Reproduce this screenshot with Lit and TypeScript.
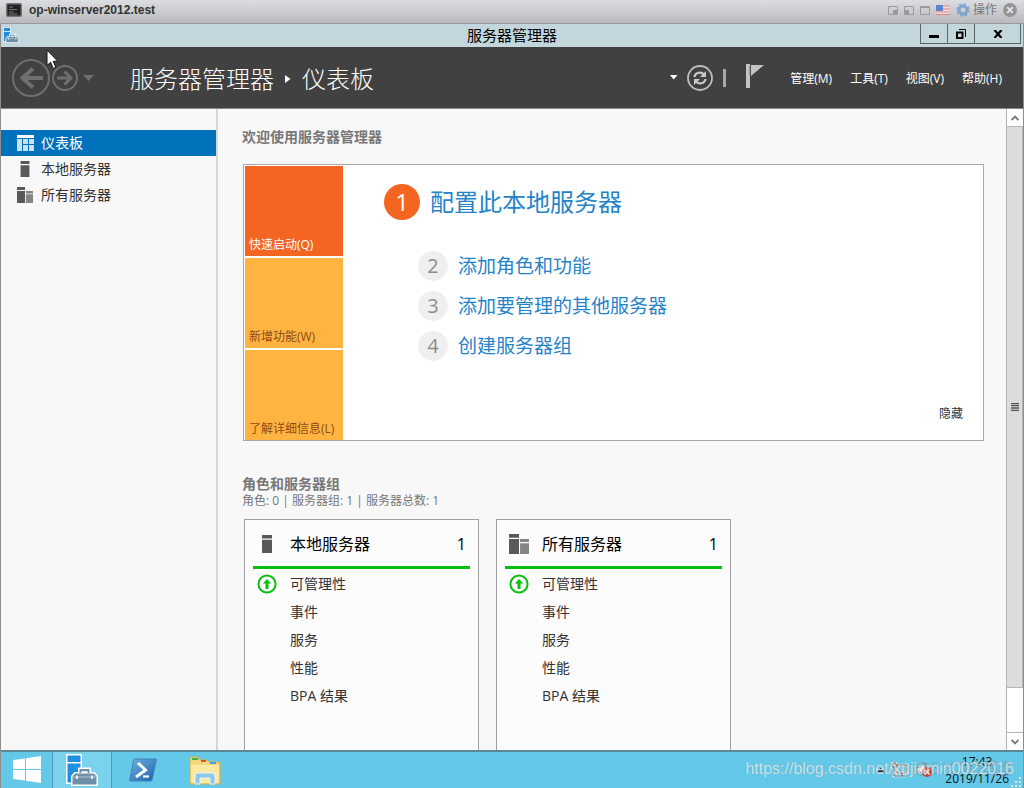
import { LitElement, html, css, svg } from "lit";
import { customElement, state } from "lit/decorators.js";
import { classMap } from "lit/directives/class-map.js";

const toolboxIcon = (size: number) => html`
  <svg width=${size} height=${size} viewBox="0 0 32 32" aria-hidden="true">
    <path d="M0 0h16v30H0z" fill="#fff" />
    <path d="M1.500 1.500h13v6.500h-13zM1.500 9.500h13v19h-13z" fill="#1f8fe0" />
    <path d="M14 19v-3.500h9V19" fill="none" stroke="#fff" stroke-width="4" />
    <path d="M8.500 18h20l3.500 4v10H5V22z" fill="#fff" />
    <path d="M14.500 19v-3h8v3" fill="none" stroke="#6f8fa8" stroke-width="2" />
    <path d="M9 19.500h19l2.500 3v8h-24v-8z" fill="#6f8fa8" />
    <path d="M7 23h23" stroke="#c5d3dd" stroke-width="0.800" />
    <path d="M11 21.500v3.500M26 21.500v3.500" stroke="#fff" stroke-width="1.600" />
  </svg>`;

const singleServer = (size: number) => html`
  <svg width=${size} height=${size} viewBox="0 0 18 18" aria-hidden="true">
    <path d="M4 0h10v3.500H4zM4 4.700h10V18H4z" fill="#595959" />
  </svg>`;

const allServers = (width: number, height: number) => html`
  <svg width=${width} height=${height} viewBox="0 0 19 19" preserveAspectRatio="none" aria-hidden="true">
    <path d="M0 0h9.500v3.500H0zM0 4.700h9.500V19H0z" fill="#595959" />
    <path d="M10.500 4.700H19v3h-8.500zM10.500 8.700H19V19h-8.500z" fill="#858585" />
  </svg>`;

const dashboardIcon = html`
  <svg width="17" height="16" viewBox="0 0 17 16" aria-hidden="true">
    <path d="M0 0h17v3H0z" fill="#fff" />
    <path d="M0 4h5v12H0zM6 4h5v5H6zM12 4h5v5h-5zM6 10h5v6H6zM12 10h5v6h-5z" fill="#c9e2f3" />
  </svg>`;

@customElement("server-card")
class ServerCard extends LitElement {
  static properties = {
    label: { type: String },
    count: { type: Number },
    group: { type: Boolean },
  };
  declare label: string;
  declare count: number;
  declare group: boolean;

  static styles = css`
    :host {
      display: block;
      box-sizing: border-box;
      flex: 0 0 235px;
      min-height: 260px;
      padding: 0 8px;
      border: 1px solid #a0a0a0;
      background: #fcfcfc;
    }
    button {
      font: inherit;
      color: inherit;
      background: none;
      border: 0;
      padding: 0;
      text-align: left;
    }
    .head {
      display: flex;
      align-items: center;
      width: 100%;
      height: 49px;
      padding-top: 2px;
      margin-bottom: 1px;
      border-bottom: 3px solid #0abf0f;
      color: #000;
      font-size: 16px;
      box-sizing: border-box;
    }
    .icon {
      display: flex;
      justify-content: center;
      width: 28px;
      margin-right: 9px;
    }
    .name { flex: 1; }
    .count { padding-right: 4px; }
    ul {
      list-style: none;
      margin: 0;
      padding: 0;
      font-size: 14px;
      color: #333;
    }
    li {
      display: flex;
      align-items: center;
      height: 28px;
    }
  `;

  render() {
    const rows = ["可管理性", "事件", "服务", "性能", "BPA 结果"];
    return html`
      <button class="head">
        <span class="icon">${this.group ? allServers(20, 20) : singleServer(18)}</span>
        <span class="name">${this.label}</span>
        <span class="count">${this.count}</span>
      </button>
      <ul>
        ${rows.map(
          (row, i) => html`<li>
            <span class="icon">
              ${i === 0
                ? html`<svg width="20" height="20" viewBox="0 0 20 20" aria-hidden="true">
                    <circle cx="10" cy="10" r="8.600" fill="none" stroke="#0abf0f" stroke-width="2" />
                    <path d="M10 5l4.200 4.500h-2.700V15h-3V9.500H5.800z" fill="#0abf0f" />
                  </svg>`
                : ""}
            </span>
            <button>${row}</button>
          </li>`
        )}
      </ul>
    `;
  }
}

@customElement("app-root")
class AppRoot extends LitElement {
  @state() page = 0;

  static styles = css`
    :host {
      display: flex;
      flex-direction: column;
      box-sizing: border-box;
      height: 100vh;
      overflow: hidden;
      position: relative;
      background: #f8f8f8;
      color: #333;
      font: 14px/20px "Open Sans", "Noto Sans CJK SC", sans-serif;
    }
    button {
      font: inherit;
      color: inherit;
      background: none;
      border: 0;
      padding: 0;
      text-align: left;
    }
    a { color: inherit; text-decoration: none; }
    svg { display: block; flex: none; }
    h1, h2, p, ol { margin: 0; padding: 0; font-weight: 400; }

    .console {
      display: flex;
      align-items: center;
      box-sizing: border-box;
      flex: 0 0 24px;
      padding: 0 7px 3px 6px;
      border-bottom: 1px solid #9a9a9c;
      background: linear-gradient(#dcdde1, #b9babd);
    }
    .console-name {
      flex: 1;
      margin-left: 7px;
      font: bold 12px/16px "Liberation Sans", sans-serif;
      color: #333;
    }
    .console-tools {
      display: flex;
      align-items: center;
      gap: 6px;
      font-size: 12px;
      line-height: 16px;
      color: #77787b;
    }
    .actions { display: flex; align-items: center; gap: 3px; }

    .window {
      display: flex;
      flex-direction: column;
      flex: 1;
      min-height: 0;
      border-left: 1px solid #8d8d8d;
      border-right: 1px solid #8d8d8d;
    }
    .titlebar {
      display: grid;
      grid-template-columns: 1fr auto 1fr;
      flex: 0 0 23px;
      background: #c3d6dc;
      color: #000;
    }
    .app-icon { padding: 3px 2px; }
    .titlebar h1 { font-size: 15px; line-height: 22px; }
    .controls { display: flex; justify-content: flex-end; padding-right: 2px; height: 20px; }
    .controls button {
      display: flex;
      align-items: center;
      justify-content: center;
      box-sizing: border-box;
      width: 27px;
      border: 1px solid #59656a;
      border-top: 0;
      border-right: 0;
    }
    .controls .close { width: 47px; border-right: 1px solid #59656a; }

    .header {
      display: flex;
      align-items: center;
      box-sizing: border-box;
      flex: 0 0 62px;
      padding: 0 21px 0 10px;
      border-bottom: 1px solid #8a8a8a;
      background: #414141;
      color: #fff;
    }
    .nav { display: flex; align-items: center; }
    .crumbs {
      display: flex;
      align-items: center;
      flex: 1;
      gap: 11px;
      margin-left: 35px;
      font-size: 24px;
      line-height: 32px;
      font-weight: 300;
      padding-top: 2px;
    }
    .status { display: flex; align-items: center; margin-right: 26px; }
    .refresh { margin: 0 10px 0 9px; }
    .flag { margin: 0 0 4px 20px; }
    .menus { display: flex; gap: 18px; font-size: 12px; padding-top: 2px; }

    .body { display: flex; flex: 1; min-height: 0; }
    .sidebar {
      box-sizing: border-box;
      flex: 0 0 217px;
      padding-top: 21px;
      border-right: 2px solid #d6d6d6;
    }
    .side-item {
      display: flex;
      align-items: center;
      width: 100%;
      height: 26px;
      padding-left: 15px;
    }
    .side-item.active { background: #0072bc; color: #fff; }
    .side-icon { display: flex; justify-content: center; width: 18px; margin-right: 7px; }

    main {
      flex: 1;
      min-width: 0;
      overflow: hidden;
      padding: 18px 22px 0 24px;
    }
    h2 { font-size: 14px; font-weight: 700; color: #777; line-height: 20px; }
    .welcome {
      display: flex;
      margin: 17px 0 33px 1px;
      padding: 1px 0 0 1px;
      border: 1px solid #a8a8a8;
      background: #fff;
    }
    .tiles { display: grid; grid-auto-rows: 90px; gap: 2px; width: 98px; flex: none; }
    .tile {
      display: flex;
      align-items: flex-end;
      padding: 0 0 1px 4px;
      background: #ffb441;
      color: #8f4a14;
      font-size: 12px;
      white-space: nowrap;
    }
    .tile.hot { background: #f46522; color: #fff; }
    .steps {
      flex: 1;
      display: flex;
      flex-direction: column;
      padding: 18px 20px 16px 41px;
      color: #2583c9;
      font-weight: 300;
    }
    .steps ol { list-style: none; flex: 1; }
    .steps li {
      display: flex;
      align-items: center;
      gap: 10px;
      height: 40px;
      margin-left: 34px;
      font-size: 19px;
    }
    .steps .first { height: 36px; margin: 0 0 26px; font-size: 24px; line-height: 32px; }
    .num {
      display: flex;
      align-items: center;
      justify-content: center;
      width: 30px;
      height: 30px;
      border-radius: 50%;
      background: #efefef;
      color: #8c8c8c;
      font-size: 20px;
    }
    .first .num { width: 36px; height: 36px; background: #f46522; color: #fff; font-size: 24px; }
    .hide { align-self: flex-end; font-size: 12px; font-weight: 400; color: #333; }
    .summary { font-size: 12px; line-height: 14px; color: #777; }
    .cards { display: flex; gap: 17px; margin: 11px 0 0 2px; }

    .scroll {
      display: flex;
      flex-direction: column;
      box-sizing: border-box;
      flex: 0 0 17px;
      border-left: 1px solid #b4b4b4;
      background: #fff;
    }
    .scroll button {
      display: flex;
      align-items: center;
      justify-content: center;
      flex: 0 0 17px;
    }
    .thumb {
      display: flex;
      align-items: center;
      justify-content: center;
      flex: 1;
      border: 1px solid #b4b4b4;
      border-left: 0;
      background: #dcdcdc;
    }
    .track { flex: 0 0 44px; border-bottom: 1px solid #b4b4b4; }

    .taskbar {
      display: flex;
      box-sizing: border-box;
      flex: 0 0 38px;
      border-top: 2px solid #5b8796;
      background: #64c9e9;
      color: #111;
      font-size: 12px;
    }
    .task {
      display: flex;
      align-items: center;
      justify-content: center;
      width: 62px;
    }
    .start { width: 51px; }
    .task.running {
      box-sizing: border-box;
      width: 60px;
      background: #7ad2ed;
      border: 1px solid #4c9fb9;
      border-top: 0;
      border-bottom: 0;
    }
    .tray {
      display: flex;
      align-items: center;
      gap: 7px;
      margin-left: auto;
      padding-right: 14px;
    }
    .clock { text-align: center; line-height: 17px; margin-left: 4px; }

    .cursor { position: absolute; left: 46px; top: 49px; }
    .grip { position: absolute; right: 2px; bottom: 0; }
    .mark {
      position: absolute;
      right: 10px;
      bottom: 8px;
      font: 16px/22px "Liberation Sans", "Noto Sans CJK SC", sans-serif;
      color: rgba(255, 255, 255, 0.7);
      text-shadow: 0 0 1px rgba(80, 110, 120, 0.5);
      pointer-events: none;
    }
    .mark.second { color: rgba(130, 150, 158, 0.55); text-shadow: none; }
  `;

  private sideItem(label: string, icon: unknown, index: number) {
    return html`<button
      class=${classMap({ "side-item": true, active: this.page === index })}
      @click=${() => (this.page = index)}
    >
      <span class="side-icon">${icon}</span>${label}
    </button>`;
  }

  private step(n: number, label: string) {
    return html`<li class=${classMap({ first: n === 1 })}>
      <span class="num">${n}</span><a href="#step${n}">${label}</a>
    </li>`;
  }

  render() {
    return html`
      <div class="console">
        <svg width="16" height="14" viewBox="0 0 16 14" aria-hidden="true">
          <rect x="0.700" y="0.700" width="14.600" height="12.600" rx="1" fill="#222" stroke="#777" stroke-width="1.400" />
          <path d="M3 4h4M3 6.500h8M3 9h5M3 11h8" stroke="#777" />
        </svg>
        <span class="console-name">op-winserver2012.test</span>
        <div class="console-tools">
          <svg width="10" height="9" viewBox="0 0 10 9"><path d="M.5.5h9v8h-9z" fill="none" stroke="#999a9d" /><path d="M5 4h4v4H5z" fill="#999a9d" /></svg>
          <svg width="10" height="9" viewBox="0 0 10 9"><path d="M.5.5h9v8h-9z" fill="none" stroke="#999a9d" /><path d="M1 4h4v4H1z" fill="#999a9d" /></svg>
          <svg width="10" height="9" viewBox="0 0 10 9"><path d="M.5.5h9v8h-9zM.5 1.500h9" fill="none" stroke="#999a9d" /></svg>
          <svg width="14" height="10" viewBox="0 0 14 10">
            <path d="M0 0h14v10H0z" fill="#f2dfe0" />
            <path d="M0 1h14M0 4h14M0 7h14M0 9.500h14" stroke="#e0807f" stroke-width="1.200" />
            <path d="M0 0h7v6H0z" fill="#5f83cf" />
          </svg>
          <button class="actions">
            <svg width="14" height="14" viewBox="0 0 15 15" aria-hidden="true">
              <circle cx="7.500" cy="7.500" r="4.200" fill="none" stroke="#7ea3cf" stroke-width="3" />
              <circle cx="7.500" cy="7.500" r="6.200" fill="none" stroke="#7ea3cf" stroke-width="2" stroke-dasharray="2.600 2.270" />
            </svg>
            操作
          </button>
          <button aria-label="关闭">
            <svg width="14" height="14" viewBox="0 0 14 14"><circle cx="7" cy="7" r="7" fill="#949598" /><path d="M4.200 4.200l5.600 5.600M9.800 4.200L4.200 9.800" stroke="#e4e4e6" stroke-width="1.800" /></svg>
          </button>
        </div>
      </div>

      <div class="window">
        <div class="titlebar">
          <span class="app-icon">${toolboxIcon(16)}</span>
          <h1>服务器管理器</h1>
          <div class="controls">
            <button aria-label="最小化"><svg width="10" height="10" viewBox="0 0 10 10"><path d="M0 6h10v3H0z" /></svg></button>
            <button aria-label="还原"><svg width="10" height="10" viewBox="0 0 10 10"><path d="M1 3.500h5.500V9H1z" fill="none" stroke="#000" stroke-width="2" /><path d="M3 .5h6.500V8" fill="none" stroke="#000" /></svg></button>
            <button class="close" aria-label="关闭"><svg width="10" height="8" viewBox="0 0 10 8"><path d="M1.500 0l7 8M8.500 0l-7 8" stroke="#000" stroke-width="2.200" /></svg></button>
          </div>
        </div>

        <div class="header">
          <div class="nav">
            <button aria-label="后退">
              <svg width="40" height="40" viewBox="0 0 40 40">
                <circle cx="20" cy="20" r="18" fill="none" stroke="#6f6f6f" stroke-width="2" />
                <path d="M32 20H12M22 10.500L11.500 20 22 29.500" fill="none" stroke="#6f6f6f" stroke-width="4" />
              </svg>
            </button>
            <button aria-label="前进">
              <svg width="28" height="28" viewBox="0 0 28 28">
                <circle cx="14" cy="14" r="12" fill="none" stroke="#6f6f6f" stroke-width="2" />
                <path d="M6 14h14M13.500 7.500l6.500 6.500-6.500 6.500" fill="none" stroke="#6f6f6f" stroke-width="3" />
              </svg>
            </button>
            <button aria-label="历史记录">
              <svg width="16" height="10" viewBox="0 0 16 10"><path d="M4 2h11L9.500 8z" fill="#6f6f6f" /></svg>
            </button>
          </div>
          <div class="crumbs">
            <span>服务器管理器</span>
            <svg width="6" height="8" viewBox="0 0 6 8" aria-hidden="true"><path d="M0 0l5.500 4L0 8z" fill="#fff" /></svg>
            <span>仪表板</span>
          </div>
          <div class="status">
            <svg width="8" height="5" viewBox="0 0 8 5"><path d="M0 0h7.500L3.700 4.500z" fill="#fff" /></svg>
            <button class="refresh" aria-label="刷新">
              <svg width="26" height="26" viewBox="0 0 26 26">
                <circle cx="13" cy="13" r="12" fill="none" stroke="#bdbdbd" stroke-width="1.800" />
                <path d="M7.500 12c.5-4.500 6.500-6 9.500-2.500M18.500 14c-.5 4.500-6.500 6-9.500 2.500" fill="none" stroke="#c8c8c8" stroke-width="2.200" />
                <path d="M19 6v6h-6zM7 20v-6h6z" fill="#c8c8c8" />
              </svg>
            </button>
            <svg width="3" height="18" viewBox="0 0 3 18"><path d="M0 0h3v18H0z" fill="#a8a8a8" /></svg>
            <button class="flag" aria-label="通知">
              <svg width="18" height="24" viewBox="0 0 18 24"><path d="M0 0h4v24H0zM5 1h13L5 12z" fill="#c4c4c4" /><path d="M4 2v9" stroke="#6d6d6d" /></svg>
            </button>
          </div>
          <div class="menus">
            ${["管理(M)", "工具(T)", "视图(V)", "帮助(H)"].map((m) => html`<button>${m}</button>`)}
          </div>
        </div>

        <div class="body">
          <nav class="sidebar">
            ${this.sideItem("仪表板", dashboardIcon, 0)}
            ${this.sideItem("本地服务器", singleServer(16), 1)}
            ${this.sideItem("所有服务器", allServers(16, 16), 2)}
          </nav>
          <main>
            <h2>欢迎使用服务器管理器</h2>
            <section class="welcome">
              <div class="tiles">
                <button class="tile hot">快速启动(Q)</button>
                <button class="tile">新增功能(W)</button>
                <button class="tile">了解详细信息(L)</button>
              </div>
              <div class="steps">
                <ol>
                  ${["配置此本地服务器", "添加角色和功能", "添加要管理的其他服务器", "创建服务器组"].map((s, i) => this.step(i + 1, s))}
                </ol>
                <button class="hide">隐藏</button>
              </div>
            </section>
            <h2>角色和服务器组</h2>
            <p class="summary">角色: 0 | 服务器组: 1 | 服务器总数: 1</p>
            <div class="cards">
              <server-card label="本地服务器" count="1"></server-card>
              <server-card label="所有服务器" count="1" group></server-card>
            </div>
          </main>
          <div class="scroll">
            <button aria-label="向上滚动"><svg width="8" height="6" viewBox="0 0 8 6"><path d="M.5 5L4 1.500 7.500 5" fill="none" stroke="#777" stroke-width="1.800" /></svg></button>
            <div class="thumb"><svg width="8" height="8" viewBox="0 0 8 8"><path d="M0 .5h8M0 2.700h8M0 5h8M0 7.300h8" stroke="#555" stroke-width="1.300" /></svg></div>
            <div class="track"></div>
            <button aria-label="向下滚动"><svg width="8" height="6" viewBox="0 0 8 6"><path d="M.5 1L4 4.500 7.500 1" fill="none" stroke="#777" stroke-width="1.800" /></svg></button>
          </div>
        </div>

        <div class="taskbar">
          <button class="task start" aria-label="开始">
            <svg width="28" height="28" viewBox="0 0 28 28"><path d="M0 4l12-1.500V13H0zM13 2.300L28 0v13H13zM0 14h12v10.500L0 23zM13 14h15v13l-15-2.300z" fill="#fff" /></svg>
          </button>
          <button class="task running" aria-label="服务器管理器">${toolboxIcon(32)}</button>
          <button class="task" aria-label="PowerShell">
            <svg width="28" height="24" viewBox="0 0 28 24">
              <defs><linearGradient id="ps" x2="1" y2="1"><stop stop-color="#6fb2df" /><stop offset="1" stop-color="#1c5fae" /></linearGradient></defs>
              <path d="M6 1h20.500q1 0 .8 1L23 22q-.3 1-1.300 1H1.500q-1 0-.8-1L4.700 2q.3-1 1.300-1z" fill="url(#ps)" stroke="#3e83b8" />
              <path d="M9 5l7.500 7L7 19" fill="none" stroke="#fff" stroke-width="3" /><path d="M14 18.500h6" stroke="#fff" stroke-width="2.200" />
            </svg>
          </button>
          <button class="task" aria-label="文件资源管理器">
            <svg width="32" height="29" viewBox="0 0 32 29">
              <path d="M1 28V2q0-1 1-1h7l2 3h7l2 2h11v22z" fill="#f3d77d" stroke="#d2ac4a" />
              <path d="M3 2h6v2H3z" fill="#35b54a" /><path d="M12 4h5v2h-5z" fill="#d5543b" /><path d="M21 6h6v2h-6z" fill="#4a9be0" />
              <path d="M2 9h28v18H2z" fill="#fbe9a3" />
              <path d="M6 28V20q0-3 3-3h14q3 0 3 3v8h-5v-6H11v6z" fill="#8cc8e8" stroke="#e6f5fc" />
            </svg>
          </button>
          <div class="tray">
            <svg width="7" height="4" viewBox="0 0 7 4"><path d="M0 4l3.500-4L7 4z" fill="#222" /></svg>
            <svg width="18" height="16" viewBox="0 0 18 16"><path d="M6 3h10v8H6zM8 14h7M11 11v3M1 1h4v4H1zM3 5v9h3" fill="none" stroke="#fff" stroke-width="2.400" /><path d="M6 3h10v8H6zM8 14h7M11 11v3M1 1h4v4H1zM3 5v9h3" fill="none" stroke="#555" stroke-width="1" /></svg>
            <svg width="18" height="16" viewBox="0 0 18 16"><path d="M1 5h3l5-4v13l-5-4H1z" fill="#fff" stroke="#777" /><circle cx="11" cy="10" r="5" fill="#d93a34" /><path d="M8.500 7.500l5 5M13.500 7.500l-5 5" stroke="#fff" stroke-width="1.600" /></svg>
            <div class="clock">17:43<br />2019/11/26</div>
          </div>
        </div>
      </div>

      <svg class="cursor" width="13" height="21" viewBox="0 0 13 21" aria-hidden="true">
        <path d="M1 1v15.500l3.600-3.300 2.700 6.300 2.600-1.100-2.700-6.100h4.600z" fill="#fff" stroke="#111" />
      </svg>
      <svg class="grip" width="12" height="12" viewBox="0 0 12 12" aria-hidden="true">
        ${[[9, 1], [5, 5], [9, 5], [1, 9], [5, 9], [9, 9]].map(
          ([x, y]) => svg`<rect x=${x} y=${y} width="2" height="2" fill="#e9e4da" />`
        )}
      </svg>
      <span class="mark second">@51CTO博客</span>
      <span class="mark">https://blog.csdn.net/xujiamin0022016</span>
    `;
  }
}
